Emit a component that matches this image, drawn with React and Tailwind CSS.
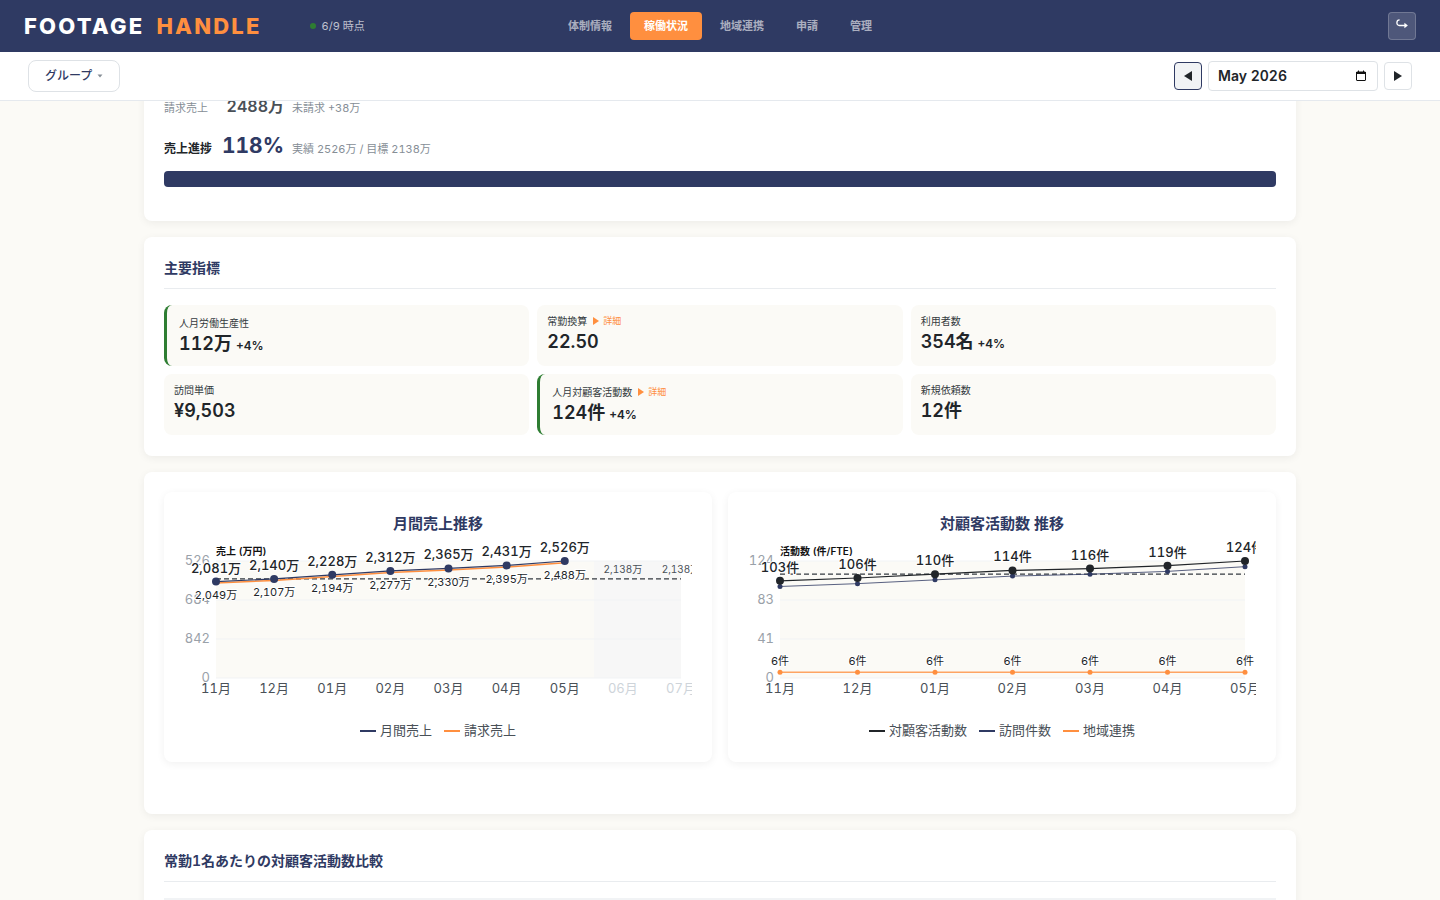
// App.jsx
// Monthly operations dashboard: header, period toolbar, KPI cards and trend charts

import { useState } from 'react';

const NAV_ITEMS = ['体制情報', '稼働状況', '地域連携', '申請', '管理'];

const METRICS = [
  { label: '人月労働生産性', value: '112万', diff: '+4%', highlight: true },
  { label: '常勤換算', value: '22.50', detail: true },
  { label: '利用者数', value: '354名', diff: '+4%' },
  { label: '訪問単価', value: '¥9,503' },
  { label: '人月対顧客活動数', value: '124件', diff: '+4%', detail: true, highlight: true },
  { label: '新規依頼数', value: '12件' },
];

const SALES = [2081, 2140, 2228, 2312, 2365, 2431, 2526];
const BILLED = [2049, 2107, 2194, 2277, 2330, 2395, 2488];
const SALES_TARGET = 2138;
const SALES_MONTHS = ['11月', '12月', '01月', '02月', '03月', '04月', '05月', '06月', '07月'];

const ACTIVITIES = [103, 106, 110, 114, 116, 119, 124];
const VISITS = [97, 100, 104, 108, 110, 113, 118];
const REGIONAL = [6, 6, 6, 6, 6, 6, 6];
const ACTIVITY_TARGET = 110;

// Plot area inside the 508 x 160 chart viewBox
const LEFT = 32;
const RIGHT = 497;
const TOP = 21;
const BOTTOM = 138;

const xAt = (i, count) => LEFT + ((RIGHT - LEFT) * i) / (count - 1);
const yAt = (value, max) => BOTTOM - ((BOTTOM - TOP) * value) / max;
const toPoints = (values, count, max) =>
  values.map((v, i) => `${xAt(i, count)},${yAt(v, max)}`).join(' ');
const formatMan = (value) => `${value.toLocaleString('en-US')}万`;

function Header() {
  return (
    <header className="grid h-[52px] shrink-0 grid-cols-[1fr_auto_1fr] items-center bg-[#2f3a63] px-6">
      <div className="flex items-center gap-12">
        <div className="flex gap-3 text-[22px] font-extrabold tracking-widest text-white">
          <span>FOOTAGE</span>
          <span className="text-[#ff8f3f]">HANDLE</span>
        </div>
        <div className="flex items-center gap-1.5 text-[11px] text-white/70">
          <span className="size-1.5 rounded-full bg-[#2e7d32]" />
          6/9 時点
        </div>
      </div>

      <nav className="flex gap-1">
        {NAV_ITEMS.map((item) => (
          <a
            key={item}
            href="#"
            className={
              item === '稼働状況'
                ? 'rounded bg-[#ff8f3f] px-3.5 text-[11px] leading-7 font-semibold text-white'
                : 'rounded px-3.5 text-[11px] leading-7 font-semibold text-white/60'
            }
          >
            {item}
          </a>
        ))}
      </nav>

      <button
        type="button"
        aria-label="ログアウト"
        className="flex size-7 items-start justify-center justify-self-end rounded border border-white/20 bg-white/15 pt-1.5 text-white"
      >
        <svg width="12" height="10" viewBox="0 0 12 10" fill="none" stroke="currentColor" strokeWidth="1.3">
          <path d="M3.6 0.8 C0 0.8 0 6.5 3.4 6.5 H9.5" />
          <path d="M8.4 3.7 L11.9 6.5 L8.4 9.3 Z" fill="currentColor" stroke="none" />
        </svg>
      </button>
    </header>
  );
}

function Toolbar() {
  const [month, setMonth] = useState('May 2026');

  return (
    <div className="flex h-[49px] shrink-0 items-center justify-between border-b border-[#e5e9ee] bg-white px-7">
      <button
        type="button"
        className="flex h-8 items-center gap-[5px] rounded-lg border border-[#dee2e6] px-4 text-xs font-medium text-[#2f3a63]"
      >
        グループ
        <svg width="6" height="4" viewBox="0 0 6 4" fill="#868e96">
          <path d="M0.5 0.5 H5.5 L3 3.5 Z" />
        </svg>
      </button>

      <div className="flex items-center gap-1.5">
        <button
          type="button"
          aria-label="前の月"
          className="flex size-7 items-center justify-center rounded border border-[#2f3a63] bg-[#f1f3f5] text-[#212529]"
        >
          <svg width="8" height="10" viewBox="0 0 8 10" fill="currentColor">
            <path d="M8 0 V10 L0 5 Z" />
          </svg>
        </button>
        <div className="flex h-[30px] w-[170px] items-center rounded border border-[#dee2e6] bg-white pr-2.5 pl-[9px]">
          <input
            type="text"
            aria-label="対象月"
            value={month}
            onChange={(e) => setMonth(e.target.value)}
            className="min-w-0 flex-1 text-sm font-semibold text-[#212529] outline-none"
          />
          <button type="button" aria-label="カレンダーを開く" className="text-[#111]">
            <svg width="12" height="12" viewBox="0 0 12 12" fill="none" stroke="currentColor">
              <rect x="1.5" y="2" width="9" height="8.5" rx="0.5" />
              <path d="M1 3 H11" strokeWidth="2" />
              <path d="M3.5 0.5 V2 M8.5 0.5 V2" />
            </svg>
          </button>
        </div>
        <button
          type="button"
          aria-label="次の月"
          className="flex size-7 items-center justify-center rounded border border-[#dee2e6] bg-white text-[#212529]"
        >
          <svg width="8" height="10" viewBox="0 0 8 10" fill="currentColor">
            <path d="M0 0 V10 L8 5 Z" />
          </svg>
        </button>
      </div>
    </div>
  );
}

function Card({ title, children }) {
  return (
    <section className="rounded-lg bg-white p-5 shadow-[0_2px_8px_rgba(0,0,0,0.06)]">
      {title && (
        <h2 className="mb-4 border-b border-[#e9ecef] pb-[9px] text-sm leading-[22px] font-semibold text-[#2f3a63]">
          {title}
        </h2>
      )}
      {children}
    </section>
  );
}

function Metric({ metric }) {
  return (
    <div
      className={
        metric.highlight
          ? 'rounded-lg border-l-[3px] border-[#2e7d32] bg-[#fbfaf6] px-3 pt-3 pb-2.5'
          : 'rounded-lg bg-[#fbfaf6] p-2.5'
      }
    >
      <div className="flex items-center gap-1.5 text-[10px] leading-3 text-[#343a40]">
        {metric.label}
        {metric.detail && (
          <button type="button" className="flex items-center gap-1 text-[9px] leading-3 text-[#ff8f3f]">
            <svg width="6" height="8" viewBox="0 0 6 8" fill="currentColor">
              <path d="M0 0 V8 L6 4 Z" />
            </svg>
            詳細
          </button>
        )}
      </div>
      <div className="mt-[3px] text-lg leading-6 font-semibold text-[#212529]">
        {metric.value}
        {metric.diff && <span className="ml-1 text-xs">{metric.diff}</span>}
      </div>
    </div>
  );
}

// Background, grid lines, axis labels and month names
function ChartFrame({ axisTitle, ticks, months, futureFrom }) {
  return (
    <g>
      <rect x={LEFT} y={TOP} width={RIGHT - LEFT} height={BOTTOM - TOP} fill="#fbfaf6" />
      {futureFrom && (
        <rect x={futureFrom} y={TOP} width={RIGHT - futureFrom} height={BOTTOM - TOP} fill="#f7f7f7" />
      )}
      {ticks.map((tick, i) => {
        const y = TOP + ((BOTTOM - TOP) * i) / 3;
        return (
          <g key={tick}>
            <line x1={LEFT} x2={RIGHT} y1={y} y2={y} stroke="#f1f3f5" />
            <text x={LEFT - 6} y={y + 4} textAnchor="end" fontSize="13" fill="#9aa1a9">
              {tick}
            </text>
          </g>
        );
      })}
      <text x={LEFT} y="15" fontSize="10" fontWeight="600" fill="#111">
        {axisTitle}
      </text>
      {months.map((month, i) => (
        <text
          key={month}
          x={xAt(i, months.length)}
          y="153"
          textAnchor="middle"
          fontSize="13"
          fill={i > 6 ? '#ced4da' : '#495057'}
        >
          {month}
        </text>
      ))}
    </g>
  );
}

function ValueLabels({ values, count, max, offset, size, weight, format }) {
  return values.map((value, i) => (
    <text
      key={i}
      x={xAt(i, count)}
      y={yAt(value, max) + offset}
      textAnchor="middle"
      fontSize={size}
      fontWeight={weight}
      fill="#212529"
      stroke="#fff"
      strokeWidth="2"
      paintOrder="stroke"
    >
      {format(value)}
    </text>
  ));
}

function Dots({ values, count, max, radius, color }) {
  return values.map((value, i) => (
    <circle key={i} cx={xAt(i, count)} cy={yAt(value, max)} r={radius} fill={color} />
  ));
}

function TargetLine({ y }) {
  return <line x1={LEFT} x2={RIGHT} y1={y} y2={y} stroke="#343a40" strokeWidth="1.2" strokeDasharray="5 3" />;
}

function SalesChart() {
  const max = 2526;
  const count = SALES_MONTHS.length;

  return (
    <svg viewBox="0 0 508 160" className="w-full overflow-hidden" role="img" aria-label="月間売上推移">
      <ChartFrame
        axisTitle="売上 (万円)"
        ticks={['526', '684', '842', '0']}
        months={SALES_MONTHS}
        futureFrom={410}
      />
      <TargetLine y={yAt(SALES_TARGET, max)} />
      <polyline points={toPoints(BILLED, count, max)} fill="none" stroke="#ff8f3f" strokeWidth="1.5" />
      <polyline points={toPoints(SALES, count, max)} fill="none" stroke="#2f3a63" strokeWidth="1.2" />
      <ValueLabels values={BILLED} count={count} max={max} offset={16} size="11" format={formatMan} />
      <ValueLabels values={SALES} count={count} max={max} offset={-9} size="13" weight="500" format={formatMan} />
      <Dots values={SALES} count={count} max={max} radius={4} color="#2f3a63" />
      {[7, 8].map((i) => (
        <text key={i} x={xAt(i, count)} y="33" textAnchor="middle" fontSize="10" fill="#495057">
          {formatMan(SALES_TARGET)}
        </text>
      ))}
    </svg>
  );
}

function ActivityChart() {
  const max = 124;
  const count = ACTIVITIES.length;
  const formatKen = (value) => `${value}件`;

  return (
    <svg viewBox="0 0 508 160" className="w-full overflow-hidden" role="img" aria-label="対顧客活動数 推移">
      <ChartFrame
        axisTitle="活動数 (件/FTE)"
        ticks={['124', '83', '41', '0']}
        months={SALES_MONTHS.slice(0, 7)}
      />
      <TargetLine y={yAt(ACTIVITY_TARGET, max)} />
      <polyline points={toPoints(VISITS, count, max)} fill="none" stroke="#2f3a63" strokeOpacity="0.8" />
      <Dots values={VISITS} count={count} max={max} radius={2.5} color="#2f3a63" />
      <polyline points={toPoints(REGIONAL, count, max)} fill="none" stroke="#ff8f3f" strokeOpacity="0.8" strokeWidth="1.5" />
      <Dots values={REGIONAL} count={count} max={max} radius={2.5} color="#ff8f3f" />
      <polyline points={toPoints(ACTIVITIES, count, max)} fill="none" stroke="#212529" strokeWidth="1.2" />
      <ValueLabels values={REGIONAL} count={count} max={max} offset={-7} size="11" format={formatKen} />
      <ValueLabels values={ACTIVITIES} count={count} max={max} offset={-9} size="13" weight="500" format={formatKen} />
      <Dots values={ACTIVITIES} count={count} max={max} radius={4} color="#212529" />
    </svg>
  );
}

function ChartPanel({ title, legend, children }) {
  return (
    <div className="rounded-lg bg-white p-5 shadow-[0_2px_8px_rgba(0,0,0,0.06)]">
      <h3 className="mb-1 text-center text-[15px] leading-6 font-semibold text-[#2f3a63]">{title}</h3>
      {children}
      <ul className="mt-5 flex justify-center gap-3 pb-0.5 text-[13px] leading-5 text-[#495057]">
        {legend.map((item) => (
          <li key={item.label} className="flex items-center gap-1">
            <span className={`mt-0.5 h-0.5 w-4 ${item.color}`} />
            {item.label}
          </li>
        ))}
      </ul>
    </div>
  );
}

function App() {
  return (
    <div className="flex h-screen flex-col overflow-hidden bg-[#fbfaf6] font-[Inter,'Noto_Sans_CJK_JP',sans-serif] tabular-nums">
      <Header />
      <Toolbar />

      <main className="min-h-0 flex-1 overflow-hidden">
        <div className="mx-auto -mt-[27px] flex max-w-[1200px] flex-col gap-4 px-6">
          <Card>
            <div className="flex items-baseline gap-2 text-[11px] text-[#868e96]">
              <span className="w-12">請求売上</span>
              <strong className="w-16 text-right text-base leading-6 font-semibold text-[#495057]">2488万</strong>
              <span>未請求 +38万</span>
            </div>
            <div className="mt-3 flex items-baseline gap-2 text-[11px] text-[#868e96]">
              <span className="w-12 text-xs font-bold text-[#212529]">売上進捗</span>
              <strong className="w-16 text-right text-[21px] leading-8 font-bold text-[#2f3a63]">118%</strong>
              <span>実績 2526万 / 目標 2138万</span>
            </div>
            <div className="mt-[9px] mb-3.5 h-4 rounded bg-[#2f3a63]" />
          </Card>

          <Card title="主要指標">
            <div className="grid grid-cols-3 gap-2 pb-px">
              {METRICS.map((metric) => (
                <Metric key={metric.label} metric={metric} />
              ))}
            </div>
          </Card>

          <Card>
            <div className="mb-8 grid grid-cols-2 gap-4">
              <ChartPanel
                title="月間売上推移"
                legend={[
                  { label: '月間売上', color: 'bg-[#2f3a63]' },
                  { label: '請求売上', color: 'bg-[#ff8f3f]' },
                ]}
              >
                <SalesChart />
              </ChartPanel>
              <ChartPanel
                title="対顧客活動数 推移"
                legend={[
                  { label: '対顧客活動数', color: 'bg-[#212529]' },
                  { label: '訪問件数', color: 'bg-[#2f3a63]' },
                  { label: '地域連携', color: 'bg-[#ff8f3f]' },
                ]}
              >
                <ActivityChart />
              </ChartPanel>
            </div>
          </Card>

          <Card title="常勤1名あたりの対顧客活動数比較">
            <div className="h-40 bg-[#f1f3f5]" />
          </Card>
        </div>
      </main>
    </div>
  );
}

export default App;
